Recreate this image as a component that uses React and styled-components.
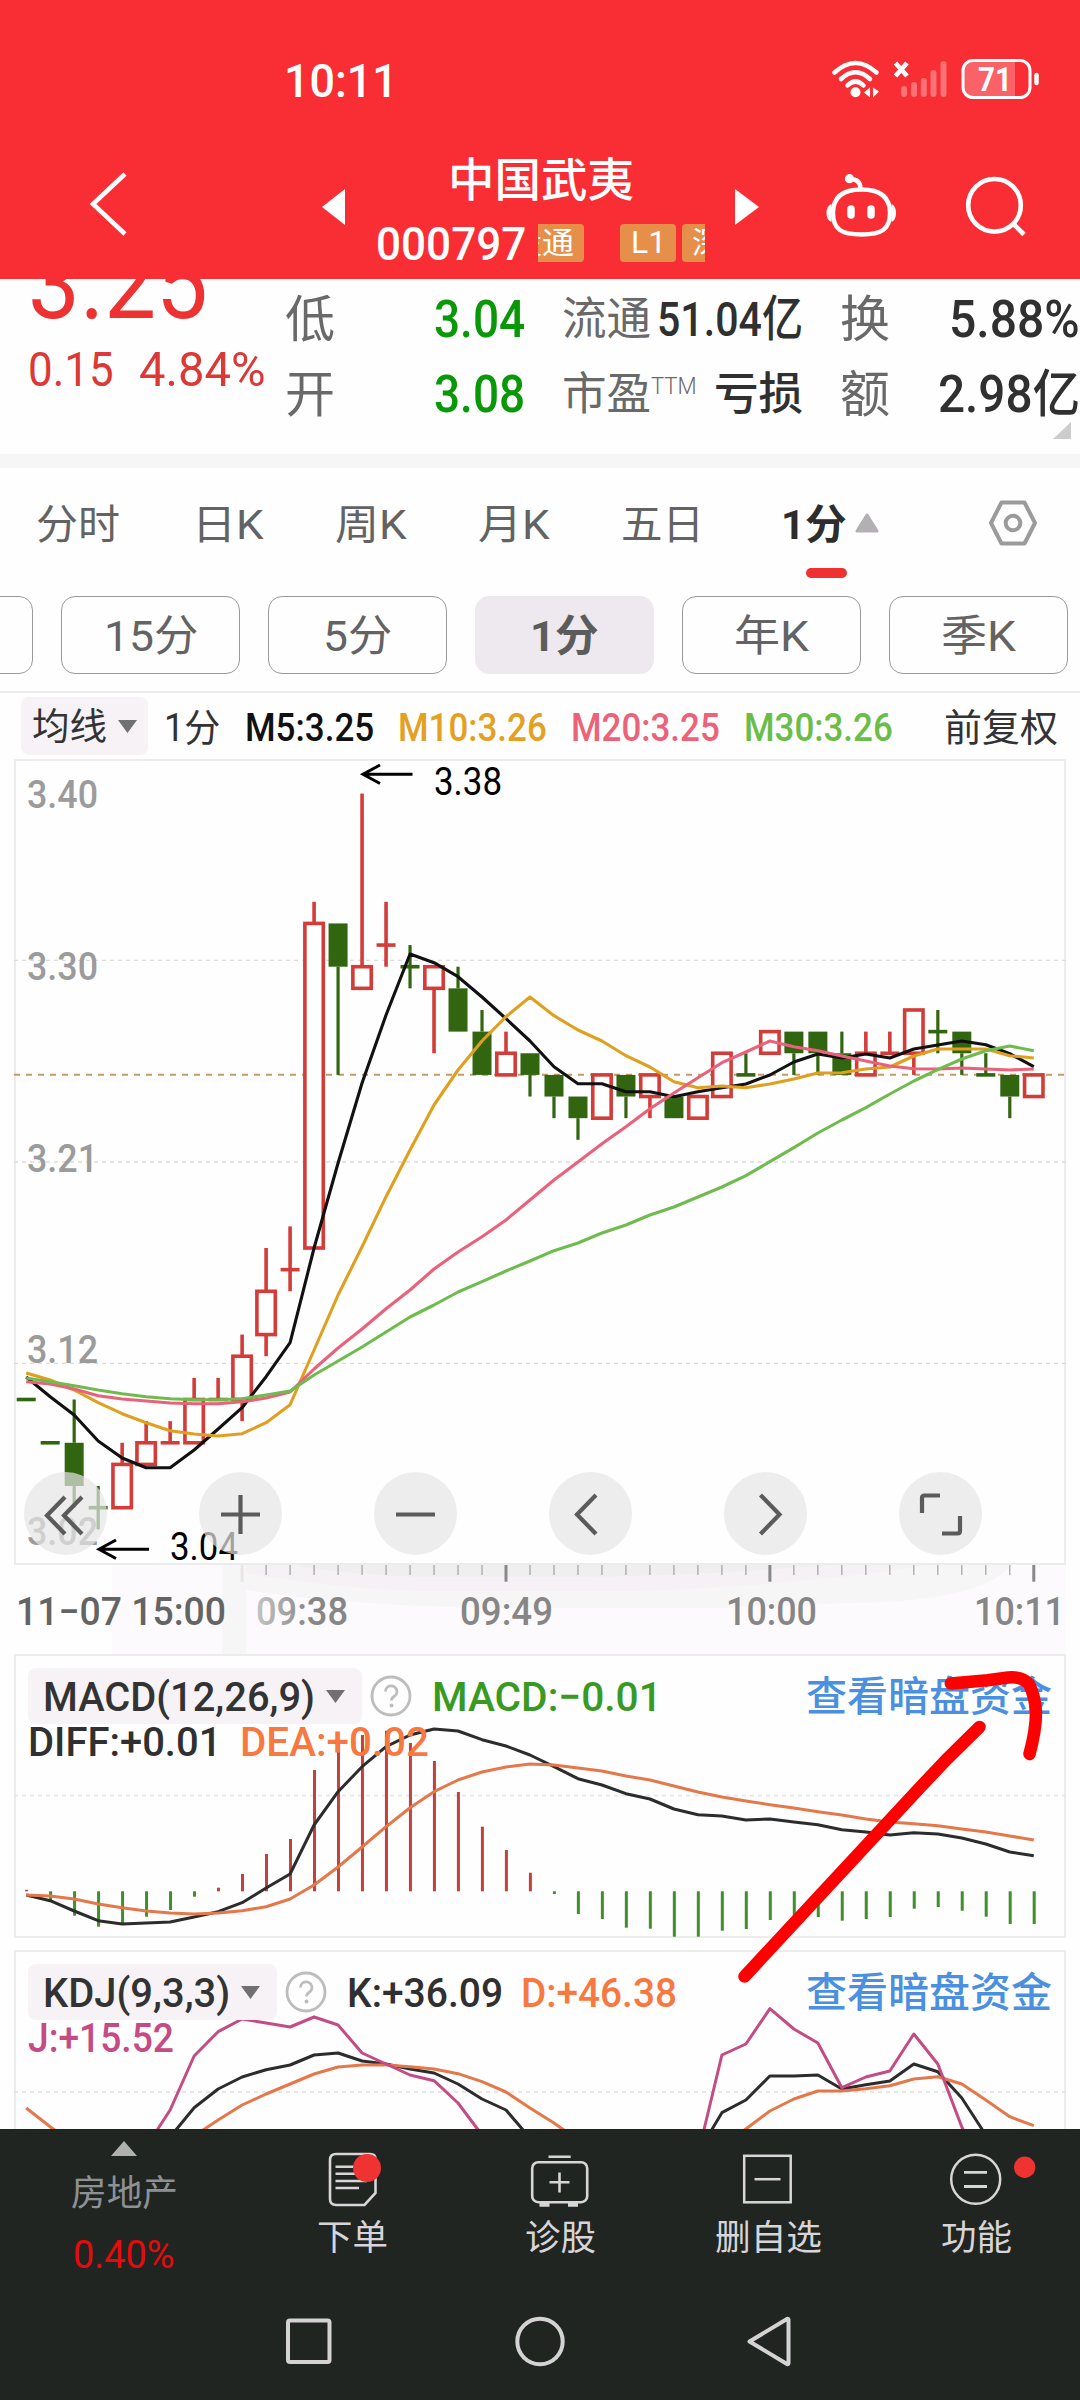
import React, { useLayoutEffect, useRef, useState } from 'react'
import styled, { createGlobalStyle } from 'styled-components'

const FONT = "Roboto, 'Noto Sans CJK SC', sans-serif"

const X0 = 26.2
const STEP = 23.99
const px = (i) => X0 + STEP * i
const py = (n) => 1074.9 + (25 - n) * 21.64

// [top, bottom, high, low, color] in cents above 3.00
const candles = [
  [10, 10, 10, 10, 'g'], [8, 8, 8, 8, 'g'], [8, 6, 10, 5, 'g'], [5, 5, 6, 4, 'g'],
  [7, 5, 8, 5, 'r'], [8, 7, 9, 7, 'r'], [8, 8, 9, 8, 'r'], [10, 8, 11, 8, 'r'],
  [10, 10, 11, 10, 'r'], [12, 10, 13, 9, 'r'], [15, 13, 17, 12, 'r'], [16, 16, 18, 15, 'r'],
  [32, 17, 33, 17, 'r'], [32, 30, 32, 25, 'g'], [30, 29, 38, 29, 'r'], [31, 31, 33, 30, 'r'],
  [30, 30, 31, 29, 'g'], [30, 29, 30, 26, 'r'], [29, 27, 30, 27, 'g'], [27, 25, 28, 25, 'g'],
  [26, 25, 27, 25, 'r'], [26, 25, 26, 24, 'g'], [25, 24, 25, 23, 'g'], [24, 23, 24, 22, 'g'],
  [25, 23, 25, 23, 'r'], [25, 24, 25, 23, 'g'], [25, 24, 25, 23, 'r'], [24, 23, 24, 23, 'g'],
  [24, 23, 24, 23, 'r'], [26, 24, 26, 24, 'r'], [25, 25, 26, 25, 'g'], [27, 26, 27, 26, 'r'],
  [27, 26, 27, 25, 'g'], [27, 26, 27, 25, 'g'], [26, 25, 27, 25, 'g'], [26, 25, 27, 25, 'r'],
  [26, 26, 27, 26, 'r'], [28, 26, 28, 25, 'r'], [27, 27, 28, 26, 'g'], [27, 26, 27, 25, 'g'],
  [25, 25, 26, 25, 'g'], [25, 24, 25, 23, 'g'], [25, 24, 25, 24, 'r'],
]

const m5 = [1377, 1396.7, 1415, 1441, 1458, 1467.7, 1467.7, 1450, 1429, 1407.7, 1376.7, 1342.7, 1248, 1163, 1083, 1015, 954, 962.7, 976.7, 997, 1018.7, 1041, 1066.7, 1083.7, 1083.7, 1091.7, 1091.7, 1096.7, 1091.7, 1087.7, 1084, 1075, 1062, 1054, 1058, 1054, 1058, 1049, 1045, 1041, 1044.7, 1053.7, 1066.7]
const m10 = [1373, 1380, 1390, 1402.7, 1413.7, 1422.7, 1430.7, 1434, 1436, 1433.7, 1422.7, 1404.7, 1350, 1295, 1246.7, 1196.7, 1150, 1105, 1070, 1041, 1016.7, 997, 1015.7, 1030, 1041, 1055.7, 1067, 1081.7, 1087.7, 1086, 1087.7, 1084, 1079, 1073, 1072.7, 1069, 1067, 1056, 1049, 1049, 1049, 1055.7, 1058]
const m20 = [1381.7, 1384, 1389, 1395.7, 1399, 1401, 1403, 1403.7, 1403.7, 1401.7, 1398, 1392, 1369, 1348, 1329, 1308.7, 1290, 1269, 1252, 1236.7, 1220, 1200, 1180, 1162, 1143.7, 1126.7, 1108.7, 1093, 1077.7, 1062.7, 1052, 1041, 1046.7, 1050.7, 1056, 1061, 1066, 1068.7, 1069, 1068, 1069, 1070, 1069]
const m30 = [1378, 1381.7, 1385.7, 1390, 1393.7, 1396.7, 1398.7, 1399.7, 1399.7, 1398.7, 1395, 1391, 1375, 1361, 1347, 1332, 1317, 1305, 1292, 1281.7, 1271, 1261, 1250.7, 1243, 1233, 1225, 1215, 1207, 1197, 1187, 1175.7, 1161.7, 1147.7, 1133, 1120, 1107.7, 1094, 1081, 1069.7, 1059, 1050.7, 1046, 1050.7]

const diff = [1895, 1900.7, 1911, 1920.7, 1924, 1923, 1922, 1917, 1911.7, 1902.7, 1888, 1874, 1825, 1791.7, 1766.7, 1746.7, 1735, 1729, 1731, 1739.7, 1746, 1755, 1766.7, 1778.7, 1785, 1793.7, 1799, 1809, 1814.7, 1816, 1820, 1819, 1822, 1824.7, 1829.7, 1832, 1835, 1832.7, 1834, 1838, 1844, 1852, 1855.7]
const dea = [1895, 1896, 1899, 1904, 1907.7, 1911, 1913, 1914, 1913, 1910.7, 1906.7, 1899, 1885, 1867, 1847, 1826.7, 1807.7, 1791.7, 1780, 1772, 1767, 1764, 1765, 1768, 1771, 1776, 1780, 1786, 1792, 1797, 1801, 1804.7, 1808, 1811.7, 1815, 1819, 1822, 1823.7, 1825.7, 1829, 1832, 1836, 1840]
const MACD_ZERO = 1891.3
const bars = [1889.8, 1900, 1915.7, 1926.7, 1923, 1916.7, 1910, 1896.7, 1887.7, 1874, 1854, 1839, 1770, 1743, 1735, 1730.7, 1743, 1761, 1792, 1826.7, 1850, 1872.7, 1894, 1914, 1919, 1927.7, 1928.7, 1936.7, 1936.7, 1930.7, 1929, 1920, 1916, 1917, 1920.7, 1919, 1917, 1908.7, 1907, 1910.7, 1916.7, 1924, 1924]

const kdjJ = [[5, 2147], [6, 2110], [7, 2056], [8, 2031.7], [9, 2019], [10, 2023], [11, 2027], [12, 2017], [13, 2025], [14, 2053], [15, 2064], [16, 2075], [17, 2080.7], [18, 2103], [19, 2135]]
const kdjJ2 = [[28, 2155], [29, 2055], [30, 2044], [31, 2008.7], [32, 2029], [33, 2043], [34, 2087.7], [35, 2077], [36, 2071], [37, 2034], [38, 2064], [39, 2127], [40, 2175]]
const kdjK = [[6, 2137], [7, 2107.7], [8, 2089], [9, 2077], [10, 2069.7], [11, 2065], [12, 2055], [13, 2053], [14, 2061], [15, 2064], [16, 2069], [17, 2073], [18, 2084], [19, 2099], [20, 2110], [21, 2138]]
const kdjK2 = [[28, 2153], [29, 2112.7], [30, 2100], [31, 2076], [32, 2076], [33, 2075], [34, 2089], [35, 2084.7], [36, 2081], [37, 2064], [38, 2071.7], [39, 2098], [40, 2135]]
const kdjD = [[7, 2136], [8, 2120], [9, 2105], [10, 2094], [11, 2084], [12, 2074], [13, 2067], [14, 2065], [15, 2065], [16, 2066.7], [17, 2069], [18, 2073.7], [19, 2081.7], [20, 2092], [21, 2108], [22, 2123], [23, 2140]]
const kdjD2 = [[29, 2147], [30, 2129], [31, 2111], [32, 2099], [33, 2091], [34, 2091], [35, 2088.7], [36, 2085.7], [37, 2079], [38, 2076.7], [39, 2084], [40, 2100], [41, 2116.7], [42, 2125.7]]

const series = (ys) => ys.map((y, i) => `${px(i)},${y}`).join(' ')
const pairs = (list) => list.map(([i, y]) => `${px(i)},${y}`).join(' ')

// Text that is squeezed or stretched to the width it was given
const Fit = ({ w, children, ...rest }) => {
  const ref = useRef(null)
  const [scale, setScale] = useState(1)
  useLayoutEffect(() => {
    setScale(w / ref.current.offsetWidth)
  }, [w, children])
  return (
    <Slot $w={w} {...rest}>
      <Glyphs ref={ref} style={{ transform: `scaleX(${scale})` }}>{children}</Glyphs>
    </Slot>
  )
}

const StatusIcons = () => (
  <svg width='212' height='48' viewBox='828 56 212 48' fill='none' stroke='#fff' strokeLinecap='round'>
    <path d='M834.500 72.500Q855.500 53.500 876.500 72.500' strokeWidth='4.500' />
    <path d='M841 79Q855.500 65.500 870 79' strokeWidth='4.500' />
    <path d='M847.500 85.500Q855.500 77.500 863.500 85.500' strokeWidth='4.500' />
    <circle cx='855.5' cy='92.3' r='5' fill='#fff' stroke='none' />
    <path d='M864 92.500L870 87.500V97.500zM873 87.500V97.500L879 91.500z' fill='#fff' stroke='none' />
    <path d='M895.500 63L907 76M907 63L895.500 76' strokeWidth='4.600' strokeLinecap='butt' />
    <g stroke='rgba(255,255,255,.33)' strokeWidth='6'>
      <path d='M904 89V94M914 85V94M923.800 81V94M933.500 73V94M943.500 64V94' />
    </g>
    <path d='M973 61h42v36h-42a9 9 0 0 1-9-9v-18a9 9 0 0 1 9-9z' fill='rgba(255,255,255,.25)' stroke='none' />
    <rect x='963' y='60.5' width='67' height='37' rx='10' strokeWidth='3' />
    <path d='M1036.500 75v8' strokeWidth='4.5' />
    <text x='978' y='91' fill='#fff' stroke='none' fontFamily='Roboto' fontWeight='700' fontSize='33' textLength='34' lengthAdjust='spacingAndGlyphs'>71</text>
  </svg>
)

const Caret = ({ w = 19, h = 13, color = '#707070' }) => (
  <svg width={w} height={h} viewBox='0 0 19 13'><path d='M0 0h19L9.500 13z' fill={color} /></svg>
)

const Help = () => (
  <svg width='42' height='42' viewBox='0 0 42 42' fill='none' stroke='#bdbdbd' strokeWidth='2.8'>
    <circle cx='21' cy='21' r='19' />
    <path d='M15.500 16.500a5.700 5.700 0 1 1 8.500 5q-2.500 1.500-2.500 4' />
    <circle cx='21.500' cy='30.500' r='2' fill='#bdbdbd' stroke='none' />
  </svg>
)

const Candle = ({ i, data }) => {
  const [top, bottom, high, low, c] = data
  const x = px(i)
  const red = c === 'r'
  const color = red ? '#d23c39' : '#316510'
  const wick = red ? 3.6 : 3.2
  if (top === bottom) {
    return (
      <g stroke={color}>
        {high !== low && <path d={`M${x} ${py(high)}V${py(low)}`} strokeWidth={wick} />}
        <path d={`M${x - 9.5} ${py(top)}h19`} strokeWidth='3.600' />
      </g>
    )
  }
  return (
    <g stroke={color} strokeWidth={wick}>
      {high > top && <path d={`M${x} ${py(high)}V${py(top)}`} />}
      {low < bottom && <path d={`M${x} ${py(bottom)}V${py(low)}`} />}
      {red
        ? <rect x={x - 9.2} y={py(top)} width='18.4' height={py(bottom) - py(top)} fill='#fff' />
        : <rect x={x - 9.5} y={py(top)} width='19' height={py(bottom) - py(top)} fill={color} stroke='none' />}
    </g>
  )
}

const PriceTag = ({ x, y, w = 71, color = '#9b9b9b', weight = 500, children }) => (
  <text x={x} y={y} fill={color} fontFamily='Roboto' fontWeight={weight} fontSize='39.500' textLength={w} lengthAdjust='spacingAndGlyphs'>{children}</text>
)

const PriceChart = () => (
  <svg width='1052' height='806' viewBox='14 759 1052 806' fill='none'>
    <g stroke='#dcdcdc' strokeWidth='1.300' strokeDasharray='4 4'>
      <path d='M14 960.300H1066M14 1162H1066M14 1363.300H1066' />
    </g>
    <path d='M14 1074.700H1066' stroke='#c49a66' strokeWidth='2' strokeDasharray='6 6' />
    {candles.map((c, i) => <Candle key={i} i={i} data={c} />)}
    <g strokeWidth='3.100' strokeLinejoin='round'>
      <polyline points={series(m5)} stroke='#111' />
      <polyline points={series(m10)} stroke='#dfa01f' />
      <polyline points={series(m20)} stroke='#e9627a' />
      <polyline points={series(m30)} stroke='#70bb4d' />
    </g>
    <PriceTag x='27' y='807.500'>3.40</PriceTag>
    <PriceTag x='27' y='979.500'>3.30</PriceTag>
    <PriceTag x='27' y='1172'>3.21</PriceTag>
    <PriceTag x='27' y='1363'>3.12</PriceTag>
    <PriceTag x='27' y='1545'>3.02</PriceTag>
    <PriceTag x='434' y='795' w={68} color='#000' weight={400}>3.38</PriceTag>
    <PriceTag x='170' y='1559.500' w={68} color='#000' weight={400}>3.04</PriceTag>
    <g stroke='#000' strokeWidth='3'>
      <path d='M363 774.300H412.500M380 765L363 774.300L380 783.500' />
      <path d='M99 1549.300H149M116 1540L99 1549.300L116 1558.500' />
    </g>
  </svg>
)

const TimeAxis = () => (
  <svg width='1066' height='90' viewBox='14 1565 1066 90' fill='none'>
    <path d='M112 1565H1066V1655H112z' fill='#fdfafd' />
    <path d='M222 1565H1012Q980 1602 850 1603L720 1608H480Q330 1604 246 1590V1655H222z' fill='#f6f6f6' />
    <path d='M246 1565H930Q800 1585 640 1591H420Q330 1588 246 1573z' fill='#f5f1f5' />
    <path d='M300 1565H830Q700 1576 560 1577H420Q340 1573 300 1567z' fill='#efefef' />
    {Array.from({ length: 34 }, (_, k) => k + 9).map((i) => {
      const major = (i - 9) % 11 === 0
      return (
        <path key={i} d={`M${px(i)} 1565v${major ? 16.7 : 10}`} stroke={i === 9 ? '#e6e6e6' : major ? '#888' : '#a0a0a0'} strokeWidth={major ? 3 : 1.200} />
      )
    })}
    <defs>
      <linearGradient id='fade' x1='256' x2='310' y1='0' y2='0' gradientUnits='userSpaceOnUse'>
        <stop offset='0' stopColor='#c4c4c4' />
        <stop offset='1' stopColor='#868686' />
      </linearGradient>
    </defs>
    <PriceTag x='16' y='1625' w={210} color='#646464'>11−07 15:00</PriceTag>
    <PriceTag x='256' y='1625' w={92} color='url(#fade)'>09:38</PriceTag>
    <PriceTag x='460' y='1625' w={93} color='#868686'>09:49</PriceTag>
    <PriceTag x='726' y='1625' w={91} color='#868686'>10:00</PriceTag>
    <PriceTag x='974' y='1625' w={91} color='#868686'>10:11</PriceTag>
  </svg>
)

const MacdChart = () => (
  <svg width='1052' height='284' viewBox='14 1654 1052 284' fill='none'>
    <path d='M14 1795.700H1066' stroke='#e6e6e6' strokeWidth='1.800' strokeDasharray='4 4' />
    {bars.map((y, i) => (
      <path key={i} d={`M${px(i) + 0.4} ${MACD_ZERO}V${y}`} stroke={y < MACD_ZERO ? '#c3403e' : '#3f9029'} strokeWidth='3' />
    ))}
    <g strokeWidth='3' strokeLinejoin='round'>
      <polyline points={series(diff)} stroke='#2c2c2c' />
      <polyline points={series(dea)} stroke='#e5784a' />
    </g>
  </svg>
)

const KdjChart = () => (
  <svg width='1052' height='284' viewBox='14 1950 1052 284' fill='none'>
    <path d='M14 2092H1066' stroke='#e6e6e6' strokeWidth='1.800' strokeDasharray='4 4' />
    <g strokeWidth='3' strokeLinejoin='round'>
      <polyline points={pairs(kdjK)} stroke='#2c2c2c' />
      <polyline points={pairs(kdjK2)} stroke='#2c2c2c' />
      <polyline points={pairs([[0, 2108], [1, 2126.7], [2, 2145]])} stroke='#e5784a' />
      <polyline points={pairs(kdjD)} stroke='#e5784a' />
      <polyline points={pairs(kdjD2)} stroke='#e5784a' />
      <polyline points={pairs(kdjJ)} stroke='#c44b84' />
      <polyline points={pairs(kdjJ2)} stroke='#c44b84' />
    </g>
  </svg>
)

const controls = [
  'M41 25L23 43.500L41 62M58 25L40 43.500L58 62',
  'M41.500 23V62M22 42.500H61',
  'M22 42.500H61',
  'M47 23L28 42.500L47 62',
  'M36.500 23L55.500 42.500L36.500 62',
  'M23 41V26Q23 23.500 25.500 23.500H41M61 44V59Q61 61.500 58.500 61.500H43',
]

const tabs = [
  { label: '分时', left: 36, w: 84 },
  { label: '日K', left: 72, w: 72 },
  { label: '周K', left: 71, w: 72 },
  { label: '月K', left: 71, w: 72 },
  { label: '五日', left: 71, w: 83 },
]

const periods = [{ label: '15分', w: 94 }, { label: '5分', w: 69 }, { label: '1分', w: 69, active: true }, { label: '年K', w: 75 }, { label: '季K', w: 75 }]

const App = () => {
  return (
    <Page>
      <GlobalStyle />
      <Header>
        <StatusBar>
          <Fit w={114} $size={46} $weight={500} $color='#fff'>10:11</Fit>
          <StatusIcons />
        </StatusBar>
        <NavBar>
          <svg width='43' height='100' viewBox='86 154 43 100' fill='none' stroke='#fff' strokeWidth='4.500'>
            <path d='M125 174L93 204L125 234' />
          </svg>
          <NavIcon $ml={193} width='24' height='100' viewBox='322 154 24 100'><path d='M345 189V225L322 207z' fill='#fff' /></NavIcon>
          <TitleBlock>
            <Fit w={186} $size={46} $weight={500} $color='#fff' $h={50}>中国武夷</Fit>
            <CodeRow>
              <Fit w={150} $size={47} $weight={500} $color='#fff' $h={40}>000797</Fit>
              <TagStrip>
                <Tag $w={80} $shift={-34} $align='flex-end'><Fit w={64} $size={30} $color='#fff' $h={38}>股通</Fit></Tag>
                <Tag $w={56} $left={36}><Fit w={35} $size={31} $color='#fff' $h={38}>L1</Fit></Tag>
                <Tag $w={112} $left={6} $align='flex-start'><Fit w={92} $size={30} $color='#fff' $h={38}>深股通</Fit></Tag>
              </TagStrip>
            </CodeRow>
          </TitleBlock>
          <NavIcon width='24' height='100' viewBox='735 154 24 100'><path d='M735 189V225L759 207z' fill='#fff' /></NavIcon>
          <NavIcon $ml={66} width='73' height='100' viewBox='825 154 73 100' fill='none' stroke='#fff' strokeWidth='4.400'>
            <path d='M861.500 189.500C880 189.500 890 197 890 213C890 229 882 234.500 861.500 234.500C841 234.500 833 229 833 213C833 197 843 189.500 861.500 189.500z' />
            <path d='M850 179Q860 179 860.500 188' />
            <circle cx='849.500' cy='178.700' r='4.600' fill='#fff' stroke='none' />
            <path d='M831.500 204Q826.500 206 826.500 213T831.500 222zM891.500 204Q896 206 896 213T891.500 222z' fill='#fff' stroke='none' />
            <path d='M851 209V215M871 209V215' strokeWidth='7.500' strokeLinecap='round' />
          </NavIcon>
          <NavIcon $ml={66} width='64' height='100' viewBox='964 154 64 100' fill='none' stroke='#fff' strokeWidth='4.600'>
            <circle cx='994.500' cy='205.300' r='26.300' />
            <path d='M1013 223.500L1024 234.500' />
          </NavIcon>
        </NavBar>
      </Header>

      <Quote>
        <PriceBlock>
          <Fit w={180} $size={100} $color='#ee3131' $h={74}>3.25</Fit>
          <ChangeRow>
            <Fit w={86} $size={49} $color='#dc3835'>0.15</Fit>
            <Fit w={126} $size={49} $color='#dc3835'>4.84%</Fit>
          </ChangeRow>
        </PriceBlock>
        <QuoteGrid>
          <Pair><Fit w={50} $size={50} $color='#696969'>低</Fit><Fit w={91} $size={52} $weight={500} $color='#089808'>3.04</Fit></Pair>
          <Pair><Fit w={89} $size={45} $color='#696969'>流通</Fit><Fit w={146} $size={49} $weight={500} $color='#303030'>51.04亿</Fit></Pair>
          <Pair><Fit w={50} $size={50} $color='#696969'>换</Fit><Fit w={131} $size={51} $weight={500} $color='#303030'>5.88%</Fit></Pair>
          <Pair><Fit w={50} $size={50} $color='#696969'>开</Fit><Fit w={91} $size={52} $weight={500} $color='#089808'>3.08</Fit></Pair>
          <Pair>
            <span><Fit w={89} $size={45} $color='#696969'>市盈</Fit><Sup><Fit w={46} $size={24} $weight={300} $color='#696969' $h={24}>TTM</Fit></Sup></span>
            <Fit w={89} $size={45} $weight={500} $color='#303030'>亏损</Fit>
          </Pair>
          <Pair><Fit w={50} $size={50} $color='#696969'>额</Fit><Fit w={142} $size={51} $weight={500} $color='#303030'>2.98亿</Fit></Pair>
        </QuoteGrid>
        <Corner />
      </Quote>
      <Band />

      <Tabs>
        {tabs.map((t) => (
          <Fit key={t.label} w={t.w} $ml={t.left} $size={41} $color='#636363'>{t.label}</Fit>
        ))}
        <ActiveTab>
          <Fit w={66} $size={41} $weight={700} $color='#2d2d2d'>1分</Fit>
          <svg width='24' height='20' viewBox='0 0 24 20'><path d='M12 2L22 18H2z' fill='#b3b0b3' stroke='#b3b0b3' strokeWidth='3' strokeLinejoin='round' /></svg>
          <Underline />
        </ActiveTab>
        <NavIcon $ml={108} width='52' height='50' viewBox='0 0 52 50' fill='none' stroke='#9b9b9b' strokeWidth='4' strokeLinejoin='round'>
          <path d='M14.500 4.500H37.500L48 25L37.500 45.500H14.500L4 25z' />
          <circle cx='26' cy='25' r='7.300' />
        </NavIcon>
      </Tabs>

      <Periods>
        <Period />
        {periods.map((p) => (
          <Period key={p.label} $active={p.active}>
            <Fit w={p.w} $size={43} $weight={p.active ? 700 : 400} $color={p.active ? '#5c5c5c' : '#636363'}>{p.label}</Fit>
          </Period>
        ))}
      </Periods>

      <Legend>
        <Picker $w={127} $h={58}>
          <Fit w={75} $size={37} $color='#333'>均线</Fit>
          <Caret />
        </Picker>
        <Fit w={56} $ml={16} $size={38} $color='#333'>1分</Fit>
        <Fit w={129} $ml={25} $size={38} $weight={500} $color='#111'>M5:3.25</Fit>
        <Fit w={149} $ml={24} $size={38} $weight={500} $color='#e3a021'>M10:3.26</Fit>
        <Fit w={149} $ml={24} $size={38} $weight={500} $color='#ec6279'>M20:3.25</Fit>
        <Fit w={149} $ml={24} $size={38} $weight={500} $color='#6bbd49'>M30:3.26</Fit>
        <Fit w={114} $ml={51} $size={38} $color='#333'>前复权</Fit>
      </Legend>

      <Panel $h={806}>
        <PriceChart />
        <Controls>
          {controls.map((d) => (
            <RoundButton key={d}>
              <svg width='83' height='83' viewBox='0 0 83 83' fill='none' stroke='#5b5b5b' strokeWidth='4.200'><path d={d} /></svg>
            </RoundButton>
          ))}
        </Controls>
      </Panel>
      <Axis><TimeAxis /></Axis>

      <Panel $h={284}>
        <MacdChart />
        <Readout>
          <ReadoutRow>
            <Picker $w={334} $h={56} $pad={15}>
              <Fit w={272} $size={41} $weight={500} $color='#333'>MACD(12,26,9)</Fit>
              <Caret />
            </Picker>
            <HelpSlot><Help /></HelpSlot>
            <Fit w={230} $ml={20} $size={41} $weight={500} $color='#389a22'>MACD:−0.01</Fit>
            <Spacer />
            <Fit w={246} $size={41} $weight={500} $color='#4a8fe0'>查看暗盘资金</Fit>
          </ReadoutRow>
          <ReadoutRow $second>
            <Fit w={193} $size={41} $weight={500} $color='#303030'>DIFF:+0.01</Fit>
            <Fit w={189} $ml={19} $size={41} $weight={500} $color='#f87842'>DEA:+0.02</Fit>
          </ReadoutRow>
        </Readout>
      </Panel>

      <Panel $h={284} $mt={12}>
        <KdjChart />
        <Readout>
          <ReadoutRow>
            <Picker $w={249} $h={56} $pad={15}>
              <Fit w={187} $size={41} $weight={500} $color='#333'>KDJ(9,3,3)</Fit>
              <Caret />
            </Picker>
            <HelpSlot><Help /></HelpSlot>
            <Fit w={156} $ml={20} $size={41} $weight={500} $color='#303030'>K:+36.09</Fit>
            <Fit w={156} $ml={18} $size={41} $weight={500} $color='#f87842'>D:+46.38</Fit>
            <Spacer />
            <Fit w={246} $size={41} $weight={500} $color='#4a8fe0'>查看暗盘资金</Fit>
          </ReadoutRow>
          <ReadoutRow $second>
            <Fit w={146} $size={41} $weight={500} $color='#c44b84'>J:+15.52</Fit>
          </ReadoutRow>
        </Readout>
      </Panel>

      <Footer>
        <TabBar>
          <Sector>
            <svg width='26' height='15' viewBox='0 0 26 15'><path d='M13 0L26 15H0z' fill='#b0b0b0' /></svg>
            <Fit w={107} $size={36} $color='#8d9193' $h={40}>房地产</Fit>
            <Fit w={102} $size={39} $color='#e30c0c' $h={40}>0.40%</Fit>
          </Sector>
          <Action>
            <svg width='60' height='60' viewBox='0 0 60 60' fill='none' stroke='#d8d5d8' strokeWidth='2.600'>
              <path d='M14 4H48Q53.500 4 53.500 9V43L42.500 55H14Q8 55 8 49V10Q8 4 14 4z' />
              <path d='M13.500 16.700H45M13.500 23.700H45M13.500 31H45M13.500 38H37' />
              <circle cx='45' cy='18' r='14' fill='#ef3232' stroke='none' />
            </svg>
            <Fit w={71} $size={35} $color='#d8d5d8' $h={40}>下单</Fit>
          </Action>
          <Action>
            <svg width='60' height='60' viewBox='0 0 60 60' fill='none' stroke='#d8d5d8' strokeWidth='2.600'>
              <rect x='2.200' y='12.200' width='55' height='40' rx='6' />
              <path d='M18.500 6.700H40.700M29.500 22.500V42.500M19.500 32.300H39.500' />
              <path d='M9.500 54.500H19.500M38 54.500H48' strokeWidth='4.500' />
            </svg>
            <Fit w={71} $size={35} $color='#d8d5d8' $h={40}>诊股</Fit>
          </Action>
          <Action>
            <svg width='60' height='60' viewBox='0 0 60 60' fill='none' stroke='#d8d5d8' strokeWidth='2.500'>
              <rect x='6.200' y='5.800' width='46.500' height='46.500' />
              <path d='M16.500 29.200H42.500' />
            </svg>
            <Fit w={107} $size={35} $color='#d8d5d8' $h={40}>删自选</Fit>
          </Action>
          <Action>
            <svg width='60' height='60' viewBox='0 0 60 60' fill='none' stroke='#d8d5d8' strokeWidth='2.500' overflow='visible'>
              <circle cx='29.700' cy='29.300' r='24.500' />
              <path d='M18 22.300H41M18 36.500H41' strokeWidth='2.800' />
              <circle cx='78.700' cy='17.300' r='10.700' fill='#ef3232' stroke='none' />
            </svg>
            <Fit w={71} $size={35} $color='#d8d5d8' $h={40}>功能</Fit>
          </Action>
        </TabBar>
        <SystemBar>
          <svg width='50' height='50' viewBox='0 0 50 50'><rect x='4' y='3.500' width='41.500' height='41.500' rx='2' /></svg>
          <svg width='52' height='52' viewBox='0 0 52 52'><circle cx='26' cy='25.500' r='22.700' /></svg>
          <svg width='52' height='52' viewBox='0 0 52 52' strokeLinejoin='round'><path d='M5.500 25.500L43 3Q44.500 2.500 44.500 4V47Q44.500 48.500 43 48z' /></svg>
        </SystemBar>
      </Footer>

      <Marker width='320' height='320' viewBox='730 1665 320 320'>
        <path d='M744.500 1976.500L920 1787.500L946 1760L979.500 1727' />
        <path d='M950.800 1683.500L987.700 1680.300L1008 1677.500Q1022 1676 1029 1684Q1035 1696 1036 1712Q1036 1730 1029.500 1754' />
      </Marker>
    </Page>
  )
}

export default App

const GlobalStyle = createGlobalStyle`
  * { box-sizing: border-box; }
  body {
    margin: 0;
    background: #fefefe;
    font-family: ${FONT};
  }
  svg { display: block; flex: none; }
`

const Page = styled.div`
  position: relative;
  width: 1080px;
  height: 2400px;
  overflow: hidden;
  display: flex;
  flex-direction: column;
  background: #fefefe;
`

const Slot = styled.span`
  display: inline-block;
  flex: none;
  vertical-align: top;
  width: ${p => p.$w}px;
  margin-left: ${p => p.$ml || 0}px;
  font-size: ${p => p.$size}px;
  font-weight: ${p => p.$weight || 400};
  line-height: ${p => p.$h || 60}px;
  color: ${p => p.$color};
`

const Glyphs = styled.span`
  display: inline-block;
  white-space: nowrap;
  transform-origin: 0 50%;
`

const Header = styled.header`
  flex: none;
  height: 279px;
  background: #f92e34;
  position: relative;
  z-index: 1;
`

const StatusBar = styled.div`
  height: 154px;
  padding: 56px 40px 0 284px;
  display: flex;
  justify-content: space-between;

  ${Slot} { line-height: 50px; }
`

const NavBar = styled.div`
  height: 125px;
  padding-left: 86px;
  display: flex;
  align-items: flex-start;
`

const NavIcon = styled.svg`
  margin-left: ${p => p.$ml || 0}px;
`

const TitleBlock = styled.div`
  width: 389px;
  padding-top: 1px;
  display: flex;
  flex-direction: column;
  align-items: center;
  gap: 19px;
`

const CodeRow = styled.div`
  display: flex;
  gap: 12px;
`

const TagStrip = styled.div`
  width: 167px;
  height: 38px;
  display: flex;
  overflow: hidden;
`

const Tag = styled.div`
  flex: none;
  width: ${p => p.$w}px;
  margin-left: ${p => p.$shift || p.$left || 0}px;
  padding: 0 10px;
  border-radius: 4px;
  background: #e68f4b;
  display: flex;
  justify-content: ${p => p.$align || 'center'};
`

const Quote = styled.section`
  position: relative;
  flex: none;
  height: 175px;
  display: flex;
`

const PriceBlock = styled.div`
  width: 286px;
  padding-left: 28px;
  margin-top: -32px;
`

const ChangeRow = styled.div`
  display: flex;
  gap: 25px;
  margin-top: 19px;
`

const QuoteGrid = styled.div`
  height: 151px;
  margin-top: 3px;
  display: grid;
  grid-template-columns: 240px 241px 240px;
  grid-template-rows: 75.5px 75.5px;
  column-gap: 37px;
`

const Pair = styled.div`
  display: flex;
  justify-content: space-between;
  align-items: center;
`

const Sup = styled.sup`
  display: inline-block;
  vertical-align: top;
  margin-top: 9px;
  line-height: 24px;
`

const Corner = styled.i`
  position: absolute;
  right: 9px;
  bottom: 15px;
  border-left: 18px solid transparent;
  border-bottom: 17px solid #ccc;
`

const Band = styled.div`
  flex: none;
  height: 14px;
  background: #f6f6f6;
`

const Tabs = styled.nav`
  flex: none;
  height: 110px;
  display: flex;
  align-items: center;

  ${Slot} { padding-top: 3px; }
`

const ActiveTab = styled.div`
  position: relative;
  height: 110px;
  margin-left: 77px;
  display: flex;
  align-items: center;
  gap: 8px;
`

const Underline = styled.i`
  position: absolute;
  left: 25px;
  bottom: 0;
  width: 41px;
  height: 10px;
  border-radius: 5px;
  background: #ef3131;
`

const Periods = styled.div`
  flex: none;
  height: 115px;
  padding-top: 18px;
  margin-left: -146px;
  display: flex;
  gap: 28px;
  border-bottom: 2px solid #ececec;

  ${Slot} { padding-top: 2px; }
`

const Period = styled.div`
  flex: none;
  width: 179px;
  height: 78px;
  display: flex;
  align-items: center;
  justify-content: center;
  border: 1.5px solid ${p => p.$active ? '#eee9ee' : '#9a9a9a'};
  border-radius: 14px;
  background: ${p => p.$active ? '#eee9ee' : 'transparent'};
`

const Legend = styled.div`
  flex: none;
  height: 66px;
  padding-left: 21px;
  display: flex;
  align-items: center;

  ${Slot} { padding-top: 3px; }
`

const Picker = styled.div`
  flex: none;
  width: ${p => p.$w}px;
  height: ${p => p.$h}px;
  padding-left: ${p => p.$pad || 11}px;
  display: flex;
  align-items: center;
  gap: 11px;
  border-radius: 8px;
  background: #f6f2f6;
`

const Panel = styled.section`
  position: relative;
  flex: none;
  height: ${p => p.$h}px;
  margin: ${p => p.$mt || 0}px 14px 0;
  box-shadow: inset 0 0 0 2px #ececec;
`

const Controls = styled.div`
  position: absolute;
  left: 10px;
  top: 713px;
  display: flex;
  gap: 92px;
`

const RoundButton = styled.div`
  width: 83px;
  height: 83px;
  border-radius: 50%;
  background: rgba(230, 230, 230, 0.7);
`

const Axis = styled.div`
  flex: none;
  height: 89px;
  margin-left: 14px;
`

const Readout = styled.div`
  position: absolute;
  left: 14px;
  right: 14px;
  top: 14px;

  ${Slot} { padding-top: 2px; }
`

const ReadoutRow = styled.div`
  display: flex;
  align-items: center;
  height: ${p => p.$second ? 34 : 56}px;
`

const HelpSlot = styled.div`
  margin-left: 8px;
`

const Spacer = styled.div`
  flex: 1;
`

const Footer = styled.footer`
  position: absolute;
  left: 0;
  bottom: 0;
  width: 1080px;
  height: 271px;
  background: #212522;
`

const TabBar = styled.div`
  height: 186px;
  display: flex;
`

const Sector = styled.div`
  width: 248px;
  padding-top: 12px;
  display: flex;
  flex-direction: column;
  align-items: center;
  gap: 21px;

  svg { margin-bottom: -3px; }
`

const Action = styled.div`
  width: 208px;
  padding-top: 21px;
  display: flex;
  flex-direction: column;
  align-items: center;
  gap: 9px;
`

const SystemBar = styled.div`
  height: 54px;
  padding-left: 284px;
  display: flex;
  align-items: center;

  svg {
    fill: none;
    stroke: #d5d2d5;
    stroke-width: 4px;
  }
  svg + svg { margin-left: 180px; }
  svg + svg + svg { margin-left: 178px; }
`

const Marker = styled.svg`
  position: absolute;
  left: 730px;
  top: 1665px;
  fill: none;
  stroke: #fe0000;
  stroke-width: 12.5px;
  stroke-linecap: round;
  stroke-linejoin: round;
`
